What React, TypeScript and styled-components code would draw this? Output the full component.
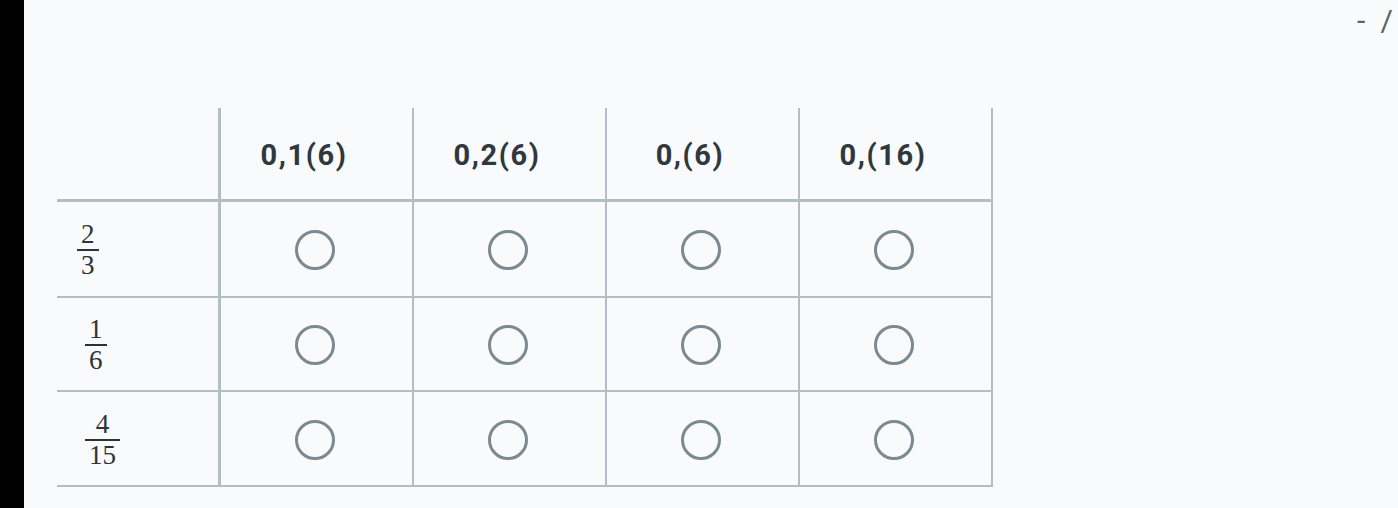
import React from "react";
import styled, { createGlobalStyle } from "styled-components";

const Global = createGlobalStyle`
  html, body { margin: 0; padding: 0; background: #f8fafc; }
  body { font-family: Roboto, "Liberation Sans", sans-serif; }
  #root { width: 1398px; height: 508px; }
`;

const Page = styled.div`
  display: flex;
  width: 1398px;
  height: 508px;
  overflow: hidden;
  background: #f8fafc;
`;

const SideStrip = styled.div`
  width: 24px;
  flex: 0 0 24px;
  background: #000;
`;

const Main = styled.div`
  flex: 1;
  display: flex;
  flex-direction: column;
`;

const TopBar = styled.div`
  height: 108px;
  display: flex;
  justify-content: flex-end;
  align-items: flex-start;
  padding-right: 5px;
  box-sizing: border-box;
`;

const Pager = styled.div`
  font-family: Roboto, "Liberation Sans", sans-serif;
  font-size: 30px;
  color: #5c6367;
  line-height: 42px;
  white-space: pre;
  word-spacing: 8px;
`;

const Grid = styled.div`
  margin-left: 33px;
  display: grid;
  grid-template-columns: 164px repeat(4, 193px);
  grid-template-rows: 94px 96px 94px 95px;
  width: max-content;
`;

const Cell = styled.div<{ $head?: boolean; $first?: boolean }>`
  box-sizing: border-box;
  border-bottom: ${(p) => (p.$head ? "3px" : "2px")} solid #b3bec2;
  border-right: ${(p) => (p.$first ? "3px" : "2px")} solid #b3bec2;
  display: flex;
  align-items: center;
  justify-content: center;
`;

const Corner = styled(Cell)`
  border-bottom-width: 3px;
`;

const HeadCell = styled(Cell)`
  padding-right: 25px;
  padding-top: 2px;
  font-family: Roboto, "Liberation Sans", sans-serif;
  font-weight: 700;
  font-size: 29px;
  letter-spacing: 1.6px;
  color: #2f383d;
`;

const LabelCell = styled(Cell)<{ $indent: number }>`
  justify-content: flex-start;
  padding-left: ${(p) => p.$indent}px;
  padding-top: 1px;
`;

const Frac = styled.span`
  display: inline-flex;
  flex-direction: column;
  align-items: center;
  font-family: "Liberation Serif", "DejaVu Serif", serif;
  font-size: 27px;
  line-height: 22px;
  color: #2d3336;
`;

const Num = styled.span`
  padding: 0 4px 4px;
`;

const Bar = styled.span`
  align-self: stretch;
  height: 2px;
  background: #2d3336;
`;

const Den = styled.span`
  padding: 3px 4px 0;
`;

const RadioCell = styled(Cell)`
  padding-right: 3px;
  padding-top: 2px;
`;

const Radio = styled.span`
  width: 40px;
  height: 40px;
  box-sizing: border-box;
  border-radius: 50%;
  border: 3.5px solid #7b8a90;
  background: transparent;
`;

const headers = ["0,1(6)", "0,2(6)", "0,(6)", "0,(16)"];
const rows: { n: string; d: string; indent: number }[] = [
  { n: "2", d: "3", indent: 20 },
  { n: "1", d: "6", indent: 28 },
  { n: "4", d: "15", indent: 28 },
];

export default function App() {
  return (
    <>
      <Global />
      <Page>
        <SideStrip />
        <Main>
          <TopBar>
            <Pager>{"- /"}</Pager>
          </TopBar>
          <Grid>
            <Corner $first />
            {headers.map((h) => (
              <HeadCell key={h} $head>
                {h}
              </HeadCell>
            ))}
            {rows.map(({ n, d, indent }) => (
              <React.Fragment key={n + d}>
                <LabelCell $first $indent={indent}>
                  <Frac>
                    <Num>{n}</Num>
                    <Bar />
                    <Den>{d}</Den>
                  </Frac>
                </LabelCell>
                {headers.map((h) => (
                  <RadioCell key={h}>
                    <Radio />
                  </RadioCell>
                ))}
              </React.Fragment>
            ))}
          </Grid>
        </Main>
      </Page>
    </>
  );
}
